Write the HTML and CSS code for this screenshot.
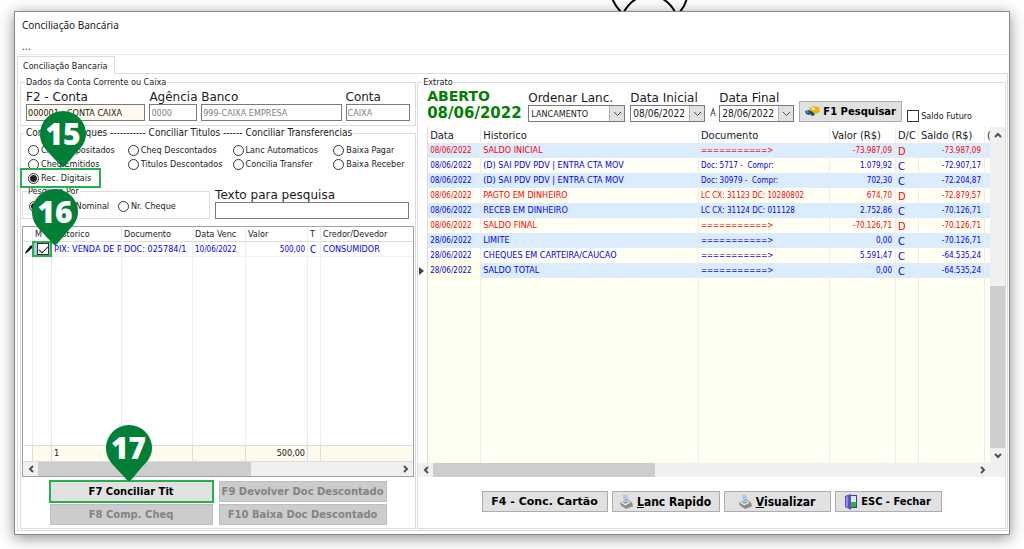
FILE: index.html
```html
<!DOCTYPE html>
<html lang="pt-BR">
<head>
<meta charset="utf-8">
<meta name="viewport" content="width=device-width, initial-scale=1">
<title>Conciliação Bancária</title>
<link rel="stylesheet" href="styles.css">
</head>
<body>
<svg class="backdrop" width="80" height="12" viewBox="0 0 80 12" aria-hidden="true"><path d="M2 -2Q5 6 11 12M14 12Q18 4 26 -1M53 -1Q61 4 65 12M70 12Q75 6 77 -2"/></svg>
<main class="window">
  <h1 class="titlebar">Conciliação Bancária</h1>
  <nav class="menubar"><a href="#">...</a></nav>
  <div class="tabs" role="tablist"><button class="tab" role="tab" aria-selected="true">Conciliação Bancaria</button></div>
  <div class="panel">
    <div class="left">
      <fieldset class="group account">
        <legend>Dados da Conta Corrente ou Caixa</legend>
        <div class="account-fields">
          <div class="field"><label for="conta">F2 - Conta</label><input class="box cream" id="conta" value="000001 - CONTA CAIXA"></div>
          <div class="field"><label for="agencia">Agência</label><input class="box" id="agencia" value="0000" disabled></div>
          <div class="field"><label for="banco">Banco</label><input class="box" id="banco" value="999-CAIXA EMPRESA" disabled></div>
          <div class="field"><label for="tipo">Conta</label><input class="box" id="tipo" value="CAIXA" disabled></div>
        </div>
      </fieldset>
      <fieldset class="group reconcile">
        <legend class="wide-legend">Conciliar Cheques ----------- Conciliar Titulos ------ Conciliar Transferencias</legend>
        <div class="modes">
          <label><input type="radio" name="modo">Cheq Depositados</label>
          <label><input type="radio" name="modo">Cheq Descontados</label>
          <label><input type="radio" name="modo">Lanc Automaticos</label>
          <label><input type="radio" name="modo">Baixa Pagar</label>
          <label><input type="radio" name="modo">Cheq Emitidos</label>
          <label><input type="radio" name="modo">Titulos Descontados</label>
          <label><input type="radio" name="modo">Concilia Transfer</label>
          <label><input type="radio" name="modo">Baixa Receber</label>
          <div class="marked mark-radio">
            <label><input type="radio" name="modo" checked>Rec. Digitais</label>
            <span class="pin"><svg viewBox="0 0 46 56" aria-hidden="true"><path d="M23 0A23 23 0 0 1 46 23C46 31 41 37 36 42L25 55Q23 57 21 55L9 42C4 37 0 31 0 23A23 23 0 0 1 23 0Z"/></svg><b>15</b></span>
          </div>
        </div>
        <div class="search">
          <fieldset class="group by">
            <legend>Pesquisa Por</legend>
            <div class="by-options">
              <label><input type="radio" name="por" checked>Cheque Nominal</label>
              <label><input type="radio" name="por">Nr. Cheque</label>
            </div>
          </fieldset>
          <div class="field"><label for="texto">Texto para pesquisa</label><input class="box" id="texto"></div>
        </div>
        <div class="grid-frame">
          <table class="titles">
            <colgroup><col class="c-ind"><col class="c-m"><col class="c-hist"><col class="c-doc"><col class="c-date"><col class="c-val"><col class="c-t"><col></colgroup>
            <thead><tr><th></th><th>M</th><th>Historico</th><th>Documento</th><th>Data Venc</th><th>Valor</th><th>T</th><th>Credor/Devedor</th></tr></thead>
            <tbody>
              <tr class="blue"><td class="ind"><svg width="9" height="12" viewBox="0 0 9 12" aria-hidden="true"><path d="M1 11L2 8L7 2L9 4L4 9Z" fill="#111"/></svg></td><td class="pick"><div class="marked mark-check"><input type="checkbox" checked aria-label="Marcar titulo"><span class="pin"><svg viewBox="0 0 46 56" aria-hidden="true"><path d="M23 0A23 23 0 0 1 46 23C46 31 41 37 36 42L25 55Q23 57 21 55L9 42C4 37 0 31 0 23A23 23 0 0 1 23 0Z"/></svg><b>16</b></span></div></td><td>PIX: VENDA DE P</td><td>DOC: 025784/1</td><td class="small">10/06/2022</td><td class="num">500,00</td><td class="flag">C</td><td>CONSUMIDOR</td></tr>
              <tr class="fill"><td></td><td></td><td></td><td></td><td></td><td></td><td></td><td></td></tr>
            </tbody>
            <tfoot><tr><td></td><td></td><td colspan="2">1</td><td></td><td class="num">500,00</td><td></td><td></td></tr></tfoot>
          </table>
          <div class="hbar"><button aria-label="Rolar para a esquerda"><svg width="6" height="8" viewBox="0 0 6 8"><path d="M5 1L2 4L5 7"/></svg></button><div class="track"><div class="thumb wide"></div></div><button aria-label="Rolar para a direita"><svg width="6" height="8" viewBox="0 0 6 8"><path d="M1 1L4 4L1 7"/></svg></button></div>
        </div>
        <div class="actions">
          <div class="marked mark-button"><button class="btn">F7 Conciliar Tit</button><span class="pin"><svg viewBox="0 0 46 56" aria-hidden="true"><path d="M23 0A23 23 0 0 1 46 23C46 31 41 37 36 42L25 55Q23 57 21 55L9 42C4 37 0 31 0 23A23 23 0 0 1 23 0Z"/></svg><b>17</b></span></div>
          <button class="btn" disabled>F9 Devolver Doc Descontado</button>
          <button class="btn" disabled>F8 Comp. Cheq</button>
          <button class="btn" disabled>F10 Baixa Doc Descontado</button>
        </div>
      </fieldset>
    </div>
    <fieldset class="group statement">
      <legend>Extrato</legend>
      <div class="filters">
        <div class="status"><span>ABERTO</span><strong>08/06/2022</strong></div>
        <div class="field order"><label for="ordem">Ordenar Lanc.</label><span class="combo"><select id="ordem"><option>LANCAMENTO</option></select><i><svg width="9" height="6" viewBox="0 0 9 6"><path d="M1 1L4.500 4.500L8 1"/></svg></i></span></div>
        <div class="field date"><label for="inicial">Data Inicial</label><span class="combo"><select id="inicial"><option>08/06/2022</option></select><i><svg width="9" height="6" viewBox="0 0 9 6"><path d="M1 1L4.500 4.500L8 1"/></svg></i></span></div>
        <span class="until">Á</span>
        <div class="field date"><label for="final">Data Final</label><span class="combo"><select id="final"><option>28/06/2022</option></select><i><svg width="9" height="6" viewBox="0 0 9 6"><path d="M1 1L4.500 4.500L8 1"/></svg></i></span></div>
        <button class="btn find"><svg width="15" height="11" viewBox="0 0 15 11" aria-hidden="true"><path d="M4 2L8 0L14 1L15 6L10 8L6 6Z" fill="#e9b51c"/><path d="M6 1L9 1L10 4L7 4Z" fill="#fbe680"/><path d="M0 5L4 4L8 6L10 9L7 10L5 8L4 9L1 8Z" fill="#174f78"/><path d="M1 5L3 5L4 7L2 7Z" fill="#4aa0c8"/></svg>F1 Pesquisar</button>
        <label class="future"><input type="checkbox">Saldo Futuro</label>
      </div>
      <div class="ledger-area">
        <table class="ledger">
          <colgroup><col class="l-ind"><col class="l-date"><col><col class="l-doc"><col class="l-val"><col class="l-dc"><col class="l-bal"><col class="l-cut"></colgroup>
          <thead><tr><th></th><th>Data</th><th>Historico</th><th>Documento</th><th>Valor (R$)</th><th>D/C</th><th>Saldo (R$)</th><th>(</th></tr></thead>
          <tbody>
            <tr class="red"><td></td><td class="small">08/06/2022</td><td>SALDO INICIAL</td><td class="doc">===========&gt;</td><td class="num">-73.987,09</td><td class="flag">D</td><td class="num">-73.987,09</td><td></td></tr>
            <tr class="blue"><td></td><td class="small">08/06/2022</td><td>(D) SAI PDV PDV | ENTRA CTA MOV</td><td class="doc">Doc: 5717 -&nbsp; Compr:</td><td class="num">1.079,92</td><td class="flag">C</td><td class="num">-72.907,17</td><td></td></tr>
            <tr class="blue"><td></td><td class="small">08/06/2022</td><td>(D) SAI PDV PDV | ENTRA CTA MOV</td><td class="doc">Doc: 30979 -&nbsp; Compr:</td><td class="num">702,30</td><td class="flag">C</td><td class="num">-72.204,87</td><td></td></tr>
            <tr class="red"><td></td><td class="small">08/06/2022</td><td>PAGTO EM DINHEIRO</td><td class="doc">LC CX: 31123 DC: 10280802</td><td class="num">674,70</td><td class="flag">D</td><td class="num">-72.879,57</td><td></td></tr>
            <tr class="blue"><td></td><td class="small">08/06/2022</td><td>RECEB EM DINHEIRO</td><td class="doc">LC CX: 31124 DC: 011128</td><td class="num">2.752,86</td><td class="flag">C</td><td class="num">-70.126,71</td><td></td></tr>
            <tr class="red"><td></td><td class="small">08/06/2022</td><td>SALDO FINAL</td><td class="doc">===========&gt;</td><td class="num">-70.126,71</td><td class="flag">D</td><td class="num">-70.126,71</td><td></td></tr>
            <tr class="blue"><td></td><td class="small">28/06/2022</td><td>LIMITE</td><td class="doc">===========&gt;</td><td class="num">0,00</td><td class="flag">C</td><td class="num">-70.126,71</td><td></td></tr>
            <tr class="blue"><td></td><td class="small">28/06/2022</td><td>CHEQUES EM CARTEIRA/CAUCAO</td><td class="doc">===========&gt;</td><td class="num">5.591,47</td><td class="flag">C</td><td class="num">-64.535,24</td><td></td></tr>
            <tr class="blue"><td class="ind"><svg width="5" height="8" viewBox="0 0 5 8" aria-hidden="true"><path d="M0 0L5 4L0 8Z" fill="#444"/></svg></td><td class="small current">28/06/2022</td><td>SALDO TOTAL</td><td class="doc">===========&gt;</td><td class="num">0,00</td><td class="flag">C</td><td class="num">-64.535,24</td><td></td></tr>
            <tr class="fill"><td></td><td></td><td></td><td></td><td></td><td></td><td></td><td></td></tr>
          </tbody>
        </table>
        <div class="vbar"><button aria-label="Rolar para cima"><svg width="8" height="6" viewBox="0 0 8 6"><path d="M1 5L4 2L7 5"/></svg></button><div class="vtrack"><div class="vthumb"></div></div><button aria-label="Rolar para baixo"><svg width="8" height="6" viewBox="0 0 8 6"><path d="M1 1L4 4L7 1"/></svg></button></div>
      </div>
      <div class="hbar ledger-bar"><button aria-label="Rolar para a esquerda"><svg width="6" height="8" viewBox="0 0 6 8"><path d="M5 1L2 4L5 7"/></svg></button><div class="track"><div class="thumb narrow"></div></div><button aria-label="Rolar para a direita"><svg width="6" height="8" viewBox="0 0 6 8"><path d="M1 1L4 4L1 7"/></svg></button></div>
      <div class="commands">
        <button class="btn card">F4 - Conc. Cartão</button>
        <button class="btn"><svg width="13" height="14" viewBox="0 0 15 16" aria-hidden="true"><path d="M3 0H8L10 6L5 8Z" fill="#a9c4f5"/><path d="M0 9L9 5L14 9L15 13L7 16L1 12Z" fill="#8b8b8b"/><path d="M1 9L9 6L12 9L6 12Z" fill="#ececec"/><path d="M3 9L8 7L10 9L6 10Z" fill="#999"/></svg><span><u>L</u>anc Rapido</span></button>
        <button class="btn"><svg width="13" height="14" viewBox="0 0 15 16" aria-hidden="true"><path d="M3 0H8L10 6L5 8Z" fill="#a9c4f5"/><path d="M0 9L9 5L14 9L15 13L7 16L1 12Z" fill="#8b8b8b"/><path d="M1 9L9 6L12 9L6 12Z" fill="#ececec"/><path d="M3 9L8 7L10 9L6 10Z" fill="#999"/></svg><span><u>V</u>isualizar</span></button>
        <button class="btn close"><svg width="12" height="16" viewBox="0 0 12 16" aria-hidden="true"><path d="M2 1H12V14H2Z" fill="#3e3aa8"/><path d="M6 2H11V8H6Z" fill="#dcecff"/><path d="M6 8H11V13H6Z" fill="#36b336"/><path d="M0 2L6 0V16L0 13Z" fill="#5753c9"/><path d="M1 3L3 2V14L1 12Z" fill="#8f8cf0"/></svg>ESC - Fechar</button>
      </div>
    </fieldset>
  </div>
</main>
</body>
</html>
```

FILE: styles.css
```css
* { box-sizing: border-box; }

body {
  display: flex;
  min-height: 100vh;
  margin: 0;
  padding: 11px 14px 14px;
  background: #fff;
  color: #1a1a1a;
  font-family: "DejaVu Sans Condensed", "DejaVu Sans", sans-serif;
  font-size: 9px;
  line-height: 12px;
}

button, input, select { font: inherit; color: inherit; margin: 0; }
svg { display: block; flex: none; }

.backdrop { position: absolute; top: 0; left: 610px; }
.backdrop path { fill: none; stroke: #000; stroke-width: 2; }

.window {
  position: relative;
  display: flex;
  flex: 1;
  flex-direction: column;
  min-width: 0;
  border: 1px solid #888;
  background: #fff;
  box-shadow: 0 3px 14px rgba(0, 0, 0, .45);
}

.titlebar {
  margin: 0;
  padding: 0 7px;
  font: 10px/26px "Noto Sans", sans-serif;
}
.menubar { padding: 2px 7px 0; border-bottom: 1px solid #ececec; font-size: 10px; line-height: 14px; }
.menubar a { color: inherit; text-decoration: none; }

.tabs { display: flex; padding: 1px 2px 0; }
.tab {
  position: relative;
  z-index: 1;
  height: 18px;
  margin-bottom: -1px;
  padding: 0 7px 0 5px;
  border: 1px solid #dcdcdc;
  border-bottom: 0;
  background: #fff;
  white-space: nowrap;
}

.panel {
  display: grid;
  flex: 1;
  grid-template-columns: minmax(0, 397fr) minmax(0, 590fr);
  gap: 1px;
  margin: 0 1px 3px 2px;
  padding: 2px 1px 1px 2px;
  border: 1px solid #dcdcdc;
}

.left { display: flex; flex-direction: column; gap: 1px; min-width: 0; }

.group { min-width: 0; margin: 0; padding: 0; border: 1px solid #dcdcdc; }
legend { margin-left: 4px; padding: 0 1px; white-space: nowrap; }
.wide-legend { font-size: 10px; }

.field { display: flex; flex-direction: column; min-width: 0; }
.field label { font: 12px/14px "DejaVu Sans", sans-serif; white-space: nowrap; }

.box {
  width: 100%;
  height: 17px;
  padding: 0 1px;
  border: 1px solid #7a7a7a;
  background: #fff;
}
.box:disabled { color: #808080; }
.cream { background: #fffaee; }

.account-fields {
  display: grid;
  grid-template-columns: 120fr 48fr 141fr 65fr;
  gap: 4px;
  padding: 2px 5px 4px;
}

.reconcile { display: flex; flex: 1; flex-direction: column; }

.modes { display: grid; grid-template-columns: 100fr 105fr 101fr 82fr; padding: 4px 0 0 7px; }
.modes label, .by label { display: flex; align-items: center; gap: 2px; height: 14px; white-space: nowrap; }

input[type="radio"] {
  appearance: none;
  flex: none;
  width: 11px;
  height: 11px;
  border: 1px solid #333;
  border-radius: 50%;
  background: #fff;
}
input[type="radio"]:checked { background: radial-gradient(circle, #222 3px, #fff 4px); }

input[type="checkbox"] {
  appearance: none;
  flex: none;
  width: 12px;
  height: 12px;
  border: 1px solid #333;
  background: #fff;
}
input[type="checkbox"]:checked::after {
  content: "";
  display: block;
  width: 8px;
  height: 4px;
  margin: 2px 0 0 1px;
  border: solid #222;
  border-width: 0 0 1px 1px;
  transform: rotate(-45deg);
}

/* Tutorial markers */
.marked { position: relative; outline: 2px solid #22b14c; }
.mark-radio { width: 75px; margin-left: -5px; padding-left: 5px; outline-offset: 1px; }
.pin {
  position: absolute;
  z-index: 2;
  width: 46px;
  height: 56px;
  pointer-events: none;
}
.pin svg { position: absolute; inset: 0; fill: #008037; }
.pin b {
  position: relative;
  display: block;
  color: #fff;
  font: 800 30px/46px "Open Sans", sans-serif;
  text-align: center;
}
.mark-radio .pin { left: 17px; bottom: 18px; }
.mark-check .pin { left: -2px; bottom: 10px; }
.mark-button .pin { left: 56px; bottom: 100%; }

.search { display: grid; grid-template-columns: 189fr 195fr; gap: 5px; padding: 0 6px 0 1px; }
.search .field { padding-top: 3px; }
.by-options { display: grid; grid-template-columns: 90fr 92fr; padding: 2px 0 4px 6px; }

.grid-frame {
  display: flex;
  flex: 1;
  flex-direction: column;
  margin: 7px 1px 0;
  border: 1px solid #a0a0a8;
}

table { width: 100%; border-collapse: separate; border-spacing: 0; table-layout: fixed; }
th, td { height: 15px; padding: 0 2px; overflow: hidden; line-height: 13px; white-space: nowrap; }
th { font-weight: 400; text-align: left; }
.num { text-align: right; }
.small { font-size: 8px; }
.flag { padding-top: 3px; font-size: 10px; line-height: 12px; }
.red { color: #f00; }
.blue { color: #00f; }
.fill td { height: auto; }
td.ind { padding: 0 0 0 1px; }

.titles { flex: 1; }
.titles th, .titles td { border-right: 1px solid #ececec; }
.titles th { border-bottom: 1px solid #dcdcdc; height: 15px; }
.titles td:last-child, .titles th:last-child { border-right: 0; }
.titles tbody tr:first-child td { border-bottom: 1px solid #f0f0f0; }
.titles .num { font-size: 8px; }
.titles .flag { padding-top: 2px; font-size: 10px; }
.titles tfoot td { height: 17px; border-top: 1px solid #dcdcdc; border-bottom: 1px solid #dcdcdc; border-right-color: #dcdcdc; background: #fffaee; }
.titles tfoot td:first-child { background: #fff; }
.titles tfoot .num { font-size: 9px; }
.titles td.pick { padding: 0 1px; overflow: visible; background: #a9c4ee; }
.mark-check { width: 16px; height: 12px; }
.mark-check input { display: block; margin-left: 3px; }
.c-ind { width: 10px; }
.c-m { width: 19px; }
.c-hist { width: 70px; }
.c-doc { width: 71px; }
.c-date { width: 53px; }
.c-val { width: 62px; }
.c-t { width: 13px; }

.hbar { display: flex; height: 14px; background: #f0f0f0; }
.hbar button, .vbar button {
  display: grid;
  place-items: center;
  width: 15px;
  height: 14px;
  padding: 0;
  border: 0;
  background: none;
}
.hbar path, .vbar path, .combo path { fill: none; stroke: #505050; stroke-width: 2; }
.track { flex: 1; }
.thumb { height: 100%; background: #cdcdcd; }
.wide { width: 59%; }
.narrow { width: 41%; }

.actions {
  display: grid;
  grid-template-columns: 163px 168px;
  justify-content: center;
  gap: 2px 6px;
  padding: 4px 0 3px;
}
.btn {
  display: flex;
  align-items: center;
  justify-content: center;
  gap: 2px;
  height: 21px;
  padding: 0 2px;
  border: 1px solid #adadad;
  background: #e1e1e1;
  color: #000;
  font: bold 10px/12px "DejaVu Sans", sans-serif;
  white-space: nowrap;
}
.btn:disabled { border-color: #bfbfbf; background: #ccc; color: #838383; }
.mark-button { outline-offset: -1px; }
.mark-button .btn { width: 100%; }

/* Statement */
.statement { display: flex; flex-direction: column; }
.filters { display: flex; align-items: flex-end; gap: 5px; padding: 0 8px 0 9px; }
.status { display: flex; flex-direction: column; width: 96px; color: #008000; font: bold 15px/18px "DejaVu Sans", sans-serif; }
.status span { font-size: 14px; line-height: 16px; }
.order { width: 97px; }
.date { width: 75px; }
.date select { font-size: 10px; }
.combo { display: grid; height: 17px; border: 1px solid #7a7a7a; }
.combo select { grid-area: 1 / 1; min-width: 0; padding: 0 2px; border: 0; appearance: none; background: #fff; }
.combo i { grid-area: 1 / 1; display: grid; place-items: center; justify-self: end; width: 15px; border-left: 1px solid #b0b0b0; background: #e1e1e1; pointer-events: none; }
.combo path { stroke-width: 1; }
.until { width: 4px; line-height: 18px; }
.find { width: 103px; gap: 3px; }
.future { display: flex; align-items: center; gap: 2px; white-space: nowrap; }

.ledger-area { display: flex; flex: 1; margin-top: 5px; }
.ledger { flex: 1; min-width: 0; background: #fffff3; }
.ledger th { background: #fff; font-size: 11px; height: 16px; }
.ledger th, .ledger td { border-right: 1px solid #ececec; }
.ledger td:first-child, .ledger th:first-child { border-right-color: #dcdcdc; background: #fff; }
.ledger td:last-child, .ledger th:last-child { padding-right: 0; border-right: 0; }
.ledger tbody tr:nth-child(odd) td { background: #dbecff; }
.ledger tbody tr.fill td { background: #fffff3; }
.ledger tbody tr td:first-child { background: #fff; }
.ledger tbody tr td.current { background: #ffffe1; }
.ledger .num { padding-right: 3px; font-size: 8px; }
.ledger .doc { font-size: 8px; }
.ledger .flag { font-size: 11px; }
.l-ind { width: 10px; }
.l-date { width: 53px; }
.l-doc { width: 131px; }
.l-val { width: 66px; }
.l-dc { width: 23px; }
.l-bal { width: 66px; }
.l-cut { width: 5px; }

.vbar { display: flex; flex: none; flex-direction: column; width: 15px; background: #f0f0f0; }
.vbar button { height: 15px; }
.vtrack { display: flex; flex: 1; flex-direction: column; justify-content: flex-end; }
.vthumb { height: 53%; background: #cdcdcd; }
.ledger-bar { padding-right: 15px; }

.commands { display: grid; grid-template-columns: 126px 108px 107px 107px; justify-content: center; gap: 4px; padding: 14px 0 16px; }
.commands .btn { font-family: "DejaVu Sans Condensed", "DejaVu Sans", sans-serif; font-size: 12px; gap: 4px; }
.commands .card { font-family: "DejaVu Sans", sans-serif; font-size: 11px; }
.commands .close { font-size: 11px; }
```
